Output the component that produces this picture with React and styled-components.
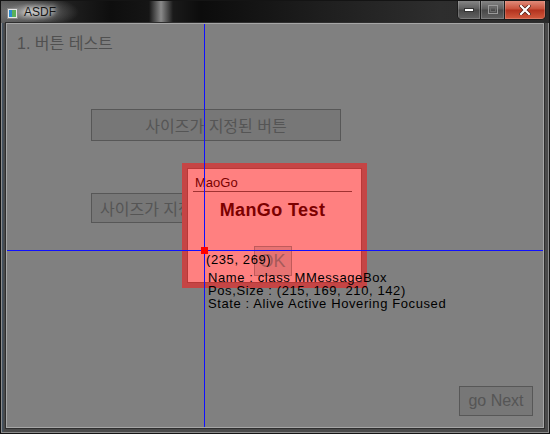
import React from "react";
import styled, { createGlobalStyle } from "styled-components";

const GlobalStyle = createGlobalStyle`
  html, body {
    margin: 0;
    padding: 0;
    background: #1e1e1e;
  }
  body {
    font-family: "Liberation Sans", "Noto Sans CJK KR", sans-serif;
  }
`;

const Window = styled.div`
  width: 550px;
  height: 434px;
  box-sizing: border-box;
  display: flex;
  flex-direction: column;
  border: 1px solid #141414;
  box-shadow: inset 0 0 0 1px #8c8c8c;
  background: linear-gradient(90deg, #3c5a78 0, #4a4a4a 3px, #4a4a4a 100%);
  overflow: hidden;
`;

const TitleBar = styled.div`
  height: 22px;
  display: flex;
  align-items: flex-start;
  padding-left: 6px;
  background:
    radial-gradient(ellipse 48px 16px at 30px 11px, rgba(200, 200, 200, 0.85), rgba(140, 140, 140, 0.4) 55%, rgba(120, 120, 120, 0) 100%),
    linear-gradient(90deg, #5a5a5a 0, #2a2a2a 40px, #0e0e0e 110px, #151515 148px, #8a8a8a 160px, #1a1a1a 172px, #0c0c0c 200px, #1e1e1e 320px, #2e2e2e 440px, #2a2a2a 100%);
`;

const AppIcon = styled.svg`
  margin-top: 7px;
  flex: none;
`;

const Title = styled.span`
  margin-left: 6px;
  line-height: 22px;
  font-size: 12px;
  color: #161616;
  text-shadow: 0 0 4px rgba(255, 255, 255, 0.9), 0 0 8px rgba(255, 255, 255, 0.6);
`;

const Captions = styled.div`
  margin-left: auto;
  margin-right: 3px;
  margin-top: -1px;
  height: 19px;
  display: flex;
  border: 1px solid #1c1c1c;
  border-top: none;
  border-radius: 0 0 5px 5px;
  overflow: hidden;
`;

const CaptionButton = styled.div`
  width: ${(p) => p.$w}px;
  display: flex;
  align-items: center;
  justify-content: center;
  box-shadow: inset 0 0 0 1px rgba(255, 255, 255, 0.18);
  border-left: ${(p) => (p.$first ? "none" : "1px solid #1c1c1c")};
  background: ${(p) =>
    p.$close
      ? "linear-gradient(#e39382, #c8503a 48%, #b2321e 52%, #d25a3e)"
      : "linear-gradient(#8a8a8a, #5c5c5c 48%, #474747 52%, #626262)"};
`;

const Body = styled.div`
  flex: 1;
  display: flex;
  padding: 0 5px 5px 5px;
`;

const Client = styled.div`
  flex: 1;
  position: relative;
  display: flex;
  flex-direction: column;
  align-items: flex-start;
  background: #808080;
  border: 1px solid #a6a6a6;
  box-shadow: 0 0 0 1px #2e2e2e;
  padding: 10px 10px 11px 10px;
  overflow: hidden;
`;

const Heading = styled.div`
  font-size: 16px;
  line-height: 20px;
  color: #505050;
`;

const GrayButton = styled.div`
  box-sizing: border-box;
  height: ${(p) => p.$h}px;
  width: ${(p) => (p.$w ? `${p.$w}px` : "auto")};
  margin-left: ${(p) => p.$ml || 0}px;
  margin-top: ${(p) => p.$mt || 0}px;
  padding: 0 8px;
  display: flex;
  align-items: center;
  justify-content: ${(p) => (p.$left ? "flex-start" : "center")};
  white-space: nowrap;
  overflow: hidden;
  font-size: 16px;
  color: #555;
  background: #777;
  border: 1px solid #575757;
`;

const NextButton = styled(GrayButton)`
  margin-top: auto;
  align-self: flex-end;
`;

const CrossV = styled.div`
  position: absolute;
  left: 197px;
  top: 0;
  bottom: 0;
  width: 1px;
  background: #1010ff;
  z-index: 3;
`;

const CrossH = styled.div`
  position: absolute;
  top: 226px;
  left: 0;
  right: 0;
  height: 1px;
  background: #1010ff;
  z-index: 3;
`;

const Cursor = styled.div`
  position: absolute;
  left: 194px;
  top: 223px;
  width: 7px;
  height: 7px;
  background: #ff0000;
  z-index: 4;
`;

const MessageBox = styled.div`
  position: absolute;
  left: 175px;
  top: 139px;
  width: 185px;
  height: 125px;
  box-sizing: border-box;
  z-index: 2;
  background: #ff8080;
  border: 5px solid #c54545;
  box-shadow: inset 0 0 0 1px #b83838;
  padding: 7px 10px 0 6px;
  display: flex;
  flex-direction: column;
  align-items: center;
`;

const BoxCaption = styled.div`
  align-self: stretch;
  font-size: 13px;
  line-height: 15px;
  color: #7a0000;
  padding-left: 2px;
  padding-bottom: 1px;
  border-bottom: 1px solid #a03232;
`;

const BoxMessage = styled.div`
  margin-top: 8px;
  font-size: 18px;
  font-weight: bold;
  letter-spacing: 0.4px;
  color: #7c0000;
`;

const OkButton = styled.div`
  margin-top: 25px;
  width: 38px;
  height: 30px;
  box-sizing: border-box;
  display: flex;
  align-items: center;
  justify-content: center;
  font-size: 18px;
  color: #a65a5a;
  background: #e77373;
  border: 1px solid #c05a5a;
`;

const InfoText = styled.div`
  position: absolute;
  left: ${(p) => p.$x}px;
  top: ${(p) => p.$y}px;
  z-index: 5;
  font-size: 13px;
  line-height: 13px;
  letter-spacing: 0.6px;
  color: #000;
  white-space: pre;
`;

const AppGlyph = () => (
  <AppIcon width="11" height="11" viewBox="0 0 11 11">
    <rect x="0.5" y="0.5" width="10" height="10" fill="#e6e6e6" stroke="#8a8a8a" />
    <rect x="2" y="2" width="3" height="7" fill="#2a8ad0" />
    <rect x="5" y="2" width="4" height="7" fill="#5ab05a" />
  </AppIcon>
);

const App = () => {
  const info = [
    "Name : class MMessageBox",
    "Pos,Size : (215, 169, 210, 142)",
    "State : Alive Active Hovering Focused",
  ];

  return (
    <>
      <GlobalStyle />
      <Window>
        <TitleBar>
          <AppGlyph />
          <Title>ASDF</Title>
          <Captions>
            <CaptionButton $w={22} $first>
              <svg width="10" height="4" viewBox="0 0 10 4">
                <rect x="0.5" y="0.5" width="9" height="3" fill="#fff" stroke="#333" />
              </svg>
            </CaptionButton>
            <CaptionButton $w={23}>
              <svg width="10" height="9" viewBox="0 0 10 9">
                <rect x="0.5" y="0.5" width="9" height="8" fill="none" stroke="#9a9a9a" />
                <rect x="2.5" y="2.5" width="5" height="4" fill="none" stroke="#6a6a6a" />
              </svg>
            </CaptionButton>
            <CaptionButton $w={40} $close>
              <svg width="12" height="10" viewBox="0 0 12 10">
                <path d="M2 1 L10 9 M10 1 L2 9" stroke="#4a1a10" strokeWidth="3.6" strokeLinecap="square" />
                <path d="M2 1 L10 9 M10 1 L2 9" stroke="#fff" strokeWidth="2.2" strokeLinecap="square" />
              </svg>
            </CaptionButton>
          </Captions>
        </TitleBar>
        <Body>
          <Client>
            <Heading>1. 버튼 테스트</Heading>
            <GrayButton $w={250} $h={32} $ml={74} $mt={55}>
              사이즈가 지정된 버튼
            </GrayButton>
            <GrayButton $w={96} $h={30} $ml={74} $mt={52} $left>
              사이즈가 지정되지 않은 버튼
            </GrayButton>
            <NextButton $w={74} $h={30}>
              go Next
            </NextButton>

            <MessageBox>
              <BoxCaption>MaoGo</BoxCaption>
              <BoxMessage>ManGo Test</BoxMessage>
              <OkButton>OK</OkButton>
            </MessageBox>

            <CrossV />
            <CrossH />
            <Cursor />
            <InfoText $x={199} $y={229}>(235, 269)</InfoText>
            <InfoText $x={201} $y={247}>{info.join("\n")}</InfoText>
          </Client>
        </Body>
      </Window>
    </>
  );
};

export default App;
